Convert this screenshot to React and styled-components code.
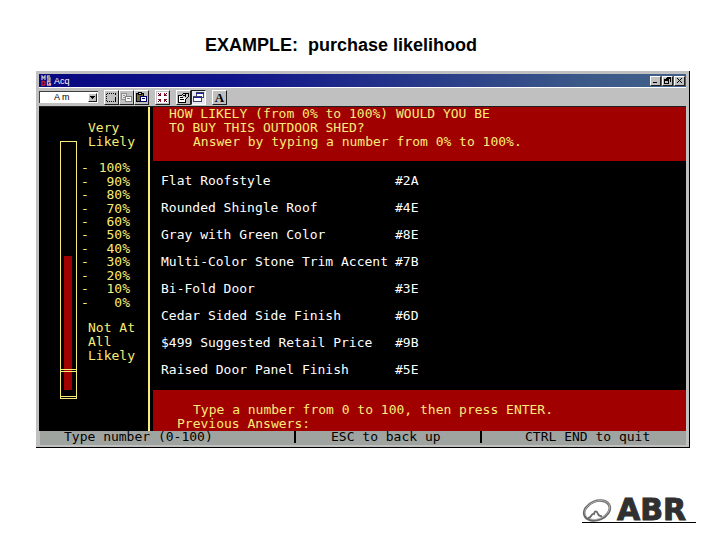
import React from "react";
import styled, { createGlobalStyle, css } from "styled-components";

const yellow = "#f8ec78";
const red = "#a00000";
const silver = "#c0c0c0";

const GlobalStyle = createGlobalStyle`
  * { box-sizing: border-box; }
  body { margin: 0; background: #fff; font-family: "Liberation Sans", Arial, sans-serif; }
`;

const Slide = styled.main`
  display: flex;
  flex-direction: column;
  padding: 35px 24px 0 36px;
`;

const Heading = styled.h1`
  margin: 0 0 16px 169px;
  font-size: 18px;
  line-height: 20px;
  font-weight: 700;
  color: #000;
  white-space: pre;
`;

const Window = styled.section`
  margin-right: 6px;
  padding: 3px 3px 2px 3px;
  background: ${silver};
  border-right: 1px solid #000;
  border-bottom: 1px solid #000;
`;

const TitleBar = styled.header`
  display: flex;
  align-items: center;
  height: 13px;
  padding: 0 1px 0 2px;
  gap: 2px;
  background: linear-gradient(90deg, #080880 0%, #10148a 30%, #3c5a88 85%, #40608a 100%);
  color: #fff;
`;

const WindowTitle = styled.h2`
  flex: 1;
  margin: 0;
  font-size: 9px;
  line-height: 12px;
  font-weight: 400;
`;

const WindowButtons = styled.div`
  display: flex;
  gap: 1px;
`;

const raised = css`
  background: ${silver};
  border: 1px solid;
  border-color: #fff #202020 #202020 #fff;
`;

const WindowButton = styled.button`
  ${raised}
  width: 11px;
  height: 10px;
  padding: 0;
  display: grid;
  place-items: center;
`;

const ToolBar = styled.div`
  display: flex;
  align-items: center;
  height: 20px;
  border-top: 1px solid #fff;
  border-bottom: 1px solid #202020;
`;

const SelectBox = styled.label`
  display: flex;
  align-items: center;
  width: 59px;
  height: 12px;
  background: #fff;
  border-top: 1px solid #404040;
  border-left: 1px solid #404040;
`;

const FontSelect = styled.select`
  flex: 1;
  min-width: 0;
  height: 11px;
  padding: 0 0 0 14px;
  border: 0;
  appearance: none;
  background: transparent;
  font: 9px/11px "Liberation Sans", Arial, sans-serif;
  color: #000;
`;

const Arrow = styled.span`
  ${raised}
  display: grid;
  place-items: center;
  width: 9px;
  height: 9px;
  margin-right: 1px;
`;

const ToolGroup = styled.div`
  display: flex;
  margin-left: 6px;
`;

const ToolButton = styled.button`
  ${raised}
  width: 15px;
  height: 15px;
  padding: 0;
  display: grid;
  place-items: center;
  ${(p) => p.$pressed && css`
    background: #e8e8f0;
    border-color: #202020 #fff #fff #202020;
  `}
`;

const Console = styled.div`
  display: grid;
  grid-template-columns: 109px 1fr;
  min-height: 324px;
  background: #000;
  font: 13px/14px "DejaVu Sans Mono", "Liberation Mono", monospace;
`;

const ScalePanel = styled.aside`
  display: flex;
  gap: 4px;
  padding: 34px 0 0 21px;
  color: ${yellow};
`;

const Tube = styled.div`
  position: relative;
  width: 17px;
  height: 258px;
  border: 1px solid ${yellow};
`;

const TubeFill = styled.div`
  position: absolute;
  left: 3px;
  right: 4px;
  bottom: 8px;
  background: ${red};
`;

const TubeBase = styled.div`
  position: absolute;
  left: 0;
  right: 0;
  bottom: 1px;
  height: 28px;
  border-top: 1px solid ${yellow};
  border-bottom: 1px solid ${yellow};
  &::before {
    content: "";
    display: block;
    margin-top: 1px;
    border-top: 1px solid ${yellow};
  }
`;

const Scale = styled.div`
  margin-top: -20px;
`;

const ScaleLabel = styled.p`
  margin: 0 0 0 7px;
  white-space: pre;
`;

const Ticks = styled.ol`
  display: grid;
  grid-template-rows: repeat(11, 1fr);
  align-items: center;
  height: 148px;
  margin: 12px 0;
  padding: 0;
  list-style: none;
  line-height: 13px;
`;

const Tick = styled.li`
  display: flex;
  justify-content: space-between;
  width: 49px;
`;

const Screen = styled.div`
  display: flex;
  flex-direction: column;
  border-left: 2px solid ${yellow};
  padding-left: 3px;
`;

const Banner = styled.div`
  background: ${red};
  color: ${yellow};
  padding: ${(p) => (p.$bottom ? "13px 0 0" : "0 0 12px")};
`;

const BannerLine = styled.p`
  margin: 0;
  padding-left: ${(p) => p.$indent}px;
  white-space: pre;
`;

const Features = styled.table`
  flex: 1;
  margin: 6px 0 7px 8px;
  border-collapse: collapse;
  color: #fff;
`;

const Feature = styled.td`
  width: 234px;
  height: 27px;
  padding: 0;
  white-space: pre;
`;

const Code = styled(Feature)`
  width: auto;
`;

const StatusBar = styled.footer`
  display: grid;
  grid-template-columns: 254fr 186fr 206fr;
  align-items: start;
  height: 14px;
  margin-left: 1px;
  background: #a0a4a0;
  font: 13px/12px "DejaVu Sans Mono", "Liberation Mono", monospace;
  color: #000;
`;

const StatusCell = styled.span`
  padding-left: ${(p) => p.$indent}px;
  white-space: nowrap;
  & + & { border-left: 2px solid #000; }
`;

const Brand = styled.footer`
  align-self: flex-end;
  display: flex;
  align-items: center;
  gap: 5px;
  width: 114px;
  height: 26px;
  margin-top: 49px;
  border-bottom: 1px solid #000;
`;

const BrandName = styled.span`
  font: 700 30px/24px "DejaVu Sans", sans-serif;
  color: #303030;
  -webkit-text-stroke: 1px #303030;
`;

const features = [
  ["Flat Roofstyle", "#2A"],
  ["Rounded Shingle Roof", "#4E"],
  ["Gray with Green Color", "#8E"],
  ["Multi-Color Stone Trim Accent", "#7B"],
  ["Bi-Fold Door", "#3E"],
  ["Cedar Sided Side Finish", "#6D"],
  ["$499 Suggested Retail Price", "#9B"],
  ["Raised Door Panel Finish", "#5E"],
];

const ticks = [100, 90, 80, 70, 60, 50, 40, 30, 20, 10, 0];
const fillLevel = 134;

const Icon = ({ w = 13, h = 13, children }) => (
  <svg width={w} height={h} viewBox={`0 0 ${w} ${h}`} shapeRendering="crispEdges" fill="none" stroke="#000" aria-hidden="true">
    {children}
  </svg>
);

const DosIcon = () => (
  <svg width="11" height="11" viewBox="0 0 11 11" fill="none" strokeWidth="1.3" aria-hidden="true">
    <path d="M1 5V1l1.5 2L4 1v4" stroke="#b8b8c8" />
    <path d="M9 1H6.500v2H9v2H6" stroke="#c0b890" />
    <path d="M1 6.500h2l1 1v2l-1 1H1z" stroke="#c02030" />
    <path d="M9.500 6.500H6.500v3.500h3V8.500H8" stroke="#e8a0a0" />
  </svg>
);

const MarkIcon = () => (
  <Icon>
    <path d="M2 2.500h7M2 10.500h7" strokeDasharray="1 1" />
    <path d="M1.500 3v7" strokeDasharray="1 1" />
    <path d="M10.500 2v2M10.500 6v5" />
  </Icon>
);

const CopyIcon = () => (
  <Icon>
    <path d="M1.500 2.500h5v6h-5zM3 4.500h2M3 6.500h2" stroke="#909090" fill="#e8e8e8" />
    <path d="M5.500 5.500h6v5h-6zM7 7.500h3" stroke="#808080" fill="#fff" />
  </Icon>
);

const PasteIcon = () => (
  <Icon>
    <path d="M1.500 2.500h7v8h-7z" fill="#706830" />
    <path d="M3.500 1.500h3v2h-3z" fill="#d8d8d8" />
    <path d="M5.500 5.500h6v5h-6zM7 7.500h3" stroke="#000060" fill="#fff" />
  </Icon>
);

const FullScreenIcon = () => (
  <Icon>
    <path d="M1 1h11v11H1z" fill="#fff" stroke="none" />
    <path d="M2 4.500h3M4.500 2v3M8.500 2v3M8 4.500h3M2 8.500h3M4.500 8v3M8.500 8v3M8 8.500h3" stroke="#a01030" />
    <path d="M2 2l3 3M11 2L8 5M11 11L8 8M2 11l3-3" stroke="#400010" />
  </Icon>
);

const PropertiesIcon = () => (
  <Icon>
    <path d="M1.500 4.500h7v7h-7zM3 6.500h3M3 8.500h4" fill="#fff" />
    <path d="M4 5l3-3h4v4L9 8" fill="#d0d0d0" />
    <path d="M6 4.500h3M8.500 3v3" />
  </Icon>
);

const BackgroundIcon = () => (
  <Icon>
    <path d="M4.500 1.500h7v5h-7z" stroke="#404060" fill="#fff" />
    <path d="M1.500 5.500h8v5h-8z" stroke="#404060" fill="#fff" />
    <path d="M4 2.500h8M1 6.500h9" stroke="#2020a0" />
  </Icon>
);

const LetterA = styled.span`
  font: 700 13px/13px "Liberation Serif", serif;
  color: #000;
`;

const BrandMark = () => (
  <svg width="30" height="24" viewBox="0 0 30 24" fill="none" aria-hidden="true">
    <ellipse cx="15" cy="12.500" rx="13.300" ry="9.300" transform="rotate(-22 15 12.500)" stroke="#686868" strokeWidth="2.600" />
    <ellipse cx="15.300" cy="12" rx="13" ry="8.800" transform="rotate(-22 15.300 12)" stroke="#c8c8c8" strokeWidth="0.700" />
    <path d="M6 20c4 0 3-5 6-4 1-4 3-3 4 0 1 2 2 2.500 4 2" stroke="#686868" strokeWidth="1.800" />
  </svg>
);

export default function App() {
  return (
    <>
      <GlobalStyle />
      <Slide>
        <Heading>{"EXAMPLE:  purchase likelihood"}</Heading>
        <Window>
          <TitleBar>
            <DosIcon />
            <WindowTitle>Acq</WindowTitle>
            <WindowButtons>
              <WindowButton aria-label="Minimize">
                <Icon w={7} h={7}><path d="M1 5.500h4" /></Icon>
              </WindowButton>
              <WindowButton aria-label="Restore">
                <Icon w={7} h={7}><path d="M2.500 0.500h4v4M0.500 2.500h4v4h-4zM2 1.500h5M0 3.500h5" /></Icon>
              </WindowButton>
              <WindowButton aria-label="Close">
                <Icon w={7} h={7}><path d="M1 1l5 5M6 1l-5 5" /></Icon>
              </WindowButton>
            </WindowButtons>
          </TitleBar>
          <ToolBar>
            <SelectBox>
              <FontSelect aria-label="Font size" defaultValue="A m">
                <option>A m</option>
              </FontSelect>
              <Arrow>
                <Icon w={5} h={3}><path d="M0 0h5L2.500 3z" fill="#000" stroke="none" /></Icon>
              </Arrow>
            </SelectBox>
            <ToolGroup>
              <ToolButton aria-label="Mark"><MarkIcon /></ToolButton>
              <ToolButton aria-label="Copy"><CopyIcon /></ToolButton>
              <ToolButton aria-label="Paste"><PasteIcon /></ToolButton>
            </ToolGroup>
            <ToolGroup>
              <ToolButton aria-label="Full screen"><FullScreenIcon /></ToolButton>
            </ToolGroup>
            <ToolGroup>
              <ToolButton aria-label="Properties"><PropertiesIcon /></ToolButton>
              <ToolButton aria-label="Background" $pressed><BackgroundIcon /></ToolButton>
            </ToolGroup>
            <ToolGroup>
              <ToolButton aria-label="Font"><LetterA>A</LetterA></ToolButton>
            </ToolGroup>
          </ToolBar>
          <Console>
            <ScalePanel>
              <Tube>
                <TubeFill style={{ height: fillLevel }} />
                <TubeBase />
              </Tube>
              <Scale>
                <ScaleLabel>{"Very\nLikely"}</ScaleLabel>
                <Ticks>
                  {ticks.map((t) => (
                    <Tick key={t}><span>-</span><span>{t}%</span></Tick>
                  ))}
                </Ticks>
                <ScaleLabel>{"Not At\nAll\nLikely"}</ScaleLabel>
              </Scale>
            </ScalePanel>
            <Screen>
              <Banner>
                <BannerLine $indent={16}>HOW LIKELY (from 0% to 100%) WOULD YOU BE</BannerLine>
                <BannerLine $indent={16}>TO BUY THIS OUTDOOR SHED?</BannerLine>
                <BannerLine $indent={40}>Answer by typing a number from 0% to 100%.</BannerLine>
              </Banner>
              <Features>
                <tbody>
                  {features.map(([name, code]) => (
                    <tr key={code}>
                      <Feature>{name}</Feature>
                      <Code>{code}</Code>
                    </tr>
                  ))}
                </tbody>
              </Features>
              <Banner $bottom>
                <BannerLine $indent={40}>Type a number from 0 to 100, then press ENTER.</BannerLine>
                <BannerLine $indent={24}>Previous Answers:</BannerLine>
              </Banner>
            </Screen>
          </Console>
          <StatusBar>
            <StatusCell $indent={24}>Type number (0-100)</StatusCell>
            <StatusCell $indent={35}>ESC to back up</StatusCell>
            <StatusCell $indent={43}>CTRL END to quit</StatusCell>
          </StatusBar>
        </Window>
        <Brand>
          <BrandMark />
          <BrandName>ABR</BrandName>
        </Brand>
      </Slide>
    </>
  );
}
